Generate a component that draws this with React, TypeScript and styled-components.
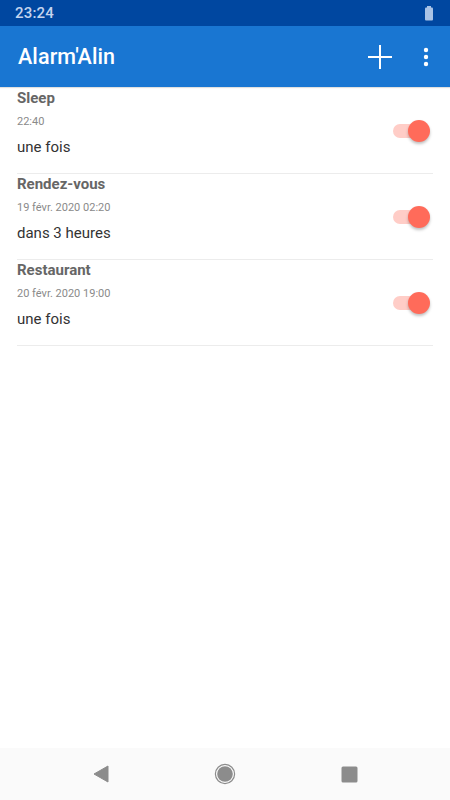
import styled, { createGlobalStyle } from 'styled-components';

const GlobalStyle = createGlobalStyle`
  html, body {
    margin: 0;
    padding: 0;
    background: #ffffff;
  }
  body {
    font-family: Roboto, "Liberation Sans", Arial, sans-serif;
  }
`;

type Alarm = {
  title: string;
  date: string;
  repeat: string;
  on: boolean;
};

const alarms: Alarm[] = [
  { title: 'Sleep', date: '22:40', repeat: 'une fois', on: true },
  { title: 'Rendez-vous', date: '19 févr. 2020 02:20', repeat: 'dans 3 heures', on: true },
  { title: 'Restaurant', date: '20 févr. 2020 19:00', repeat: 'une fois', on: true },
];

const BatteryIcon = () => (
  <svg width="10" height="15" viewBox="0 0 10 15">
    <rect x="3" y="0" width="4" height="2" fill="#a9c3e6" />
    <rect x="1" y="1.5" width="8" height="13" rx="1" fill="#a9c3e6" />
  </svg>
);

const PlusIcon = () => (
  <svg width="26" height="26" viewBox="0 0 26 26">
    <line x1="1" y1="13" x2="25" y2="13" stroke="#ffffff" strokeWidth="2" />
    <line x1="13" y1="1" x2="13" y2="25" stroke="#ffffff" strokeWidth="2" />
  </svg>
);

const MoreIcon = () => (
  <svg width="6" height="20" viewBox="0 0 6 20">
    <circle cx="3" cy="3" r="2.2" fill="#ffffff" />
    <circle cx="3" cy="10" r="2.2" fill="#ffffff" />
    <circle cx="3" cy="17" r="2.2" fill="#ffffff" />
  </svg>
);

const BackIcon = () => (
  <svg width="16" height="18" viewBox="0 0 16 18">
    <path d="M15 1 L15 17 L1 9 Z" fill="#8c8c8c" stroke="#8c8c8c" strokeWidth="1" strokeLinejoin="round" />
  </svg>
);

const HomeIcon = () => (
  <svg width="22" height="22" viewBox="0 0 22 22">
    <circle cx="11" cy="11" r="9.6" fill="none" stroke="#8c8c8c" strokeWidth="1.2" />
    <circle cx="11" cy="11" r="7.8" fill="#8c8c8c" />
  </svg>
);

const RecentIcon = () => (
  <svg width="17" height="17" viewBox="0 0 17 17">
    <rect x="0.5" y="0.5" width="16" height="16" rx="1.5" fill="#8c8c8c" />
  </svg>
);

export default function App() {
  return (
    <>
      <GlobalStyle />
      <Screen>
        <StatusBar>
          <Clock>23:24</Clock>
          <BatteryIcon />
        </StatusBar>
        <AppBar>
          <Title>Alarm'Alin</Title>
          <Actions>
            <IconButton aria-label="Ajouter">
              <PlusIcon />
            </IconButton>
            <IconButton aria-label="Menu">
              <MoreIcon />
            </IconButton>
          </Actions>
        </AppBar>
        <List>
          {alarms.map((a) => (
            <Item key={a.title}>
              <Texts>
                <AlarmTitle>{a.title}</AlarmTitle>
                <AlarmDate>{a.date}</AlarmDate>
                <AlarmRepeat>{a.repeat}</AlarmRepeat>
              </Texts>
              <Switch $on={a.on}>
                <Thumb $on={a.on} />
              </Switch>
            </Item>
          ))}
        </List>
        <NavBar>
          <NavButton><BackIcon /></NavButton>
          <NavButton><HomeIcon /></NavButton>
          <NavButton><RecentIcon /></NavButton>
        </NavBar>
      </Screen>
    </>
  );
}

const Screen = styled.div`
  display: flex;
  flex-direction: column;
  width: 450px;
  height: 800px;
  background: #ffffff;
  overflow: hidden;
`;

const StatusBar = styled.div`
  height: 26px;
  flex-shrink: 0;
  background: #0047a0;
  display: flex;
  align-items: center;
  justify-content: space-between;
  padding: 0 16px 0 15px;
`;

const Clock = styled.span`
  color: #c5d4ee;
  font-size: 15px;
  font-weight: 500;
  letter-spacing: 0.2px;
`;

const AppBar = styled.header`
  height: 61px;
  flex-shrink: 0;
  background: #1976d2;
  display: flex;
  align-items: center;
  justify-content: space-between;
  padding: 0 0 0 18px;
  box-shadow: 0 1px 1px rgba(0, 0, 0, 0.12);
`;

const Title = styled.h1`
  margin: 0;
  color: #ffffff;
  font-size: 21.5px;
  font-weight: 500;
  letter-spacing: 0.1px;
`;

const Actions = styled.div`
  display: flex;
  align-items: center;
  gap: 30px;
  padding-right: 21px;
`;

const IconButton = styled.button`
  background: none;
  border: none;
  padding: 0;
  display: flex;
  align-items: center;
  justify-content: center;
  cursor: pointer;
`;

const List = styled.main`
  flex: 1;
  display: flex;
  flex-direction: column;
  padding-top: 1px;
`;

const Item = styled.div`
  display: flex;
  align-items: center;
  margin: 0 17px;
  height: 86px;
  box-sizing: border-box;
  border-bottom: 1px solid #ececec;
`;

const Texts = styled.div`
  flex: 1;
  display: flex;
  flex-direction: column;
  align-self: flex-start;
`;

const AlarmTitle = styled.div`
  font-size: 15px;
  font-weight: 700;
  line-height: 20px;
  color: #666666;
`;

const AlarmDate = styled.div`
  margin-top: 7px;
  font-size: 11px;
  line-height: 14px;
  color: #8a8a8a;
`;

const AlarmRepeat = styled.div`
  margin-top: 8px;
  font-size: 15px;
  line-height: 20px;
  color: #333333;
`;

const Switch = styled.div<{ $on: boolean }>`
  position: relative;
  width: 28px;
  height: 14px;
  border-radius: 7px;
  margin-right: 12px;
  background: ${({ $on }) => ($on ? '#ffcdc7' : '#bdbdbd')};
`;

const Thumb = styled.div<{ $on: boolean }>`
  position: absolute;
  top: -4px;
  left: ${({ $on }) => ($on ? '15px' : '-9px')};
  width: 22px;
  height: 22px;
  border-radius: 50%;
  background: ${({ $on }) => ($on ? '#ff6b5a' : '#f1f1f1')};
  box-shadow: 0 2px 3px rgba(0, 0, 0, 0.25);
`;

const NavBar = styled.nav`
  height: 52px;
  flex-shrink: 0;
  background: #fafafa;
  display: grid;
  grid-template-columns: 124px 124px 124px;
  justify-content: center;
  align-items: center;
`;

const NavButton = styled.div`
  display: flex;
  align-items: center;
  justify-content: center;
`;
